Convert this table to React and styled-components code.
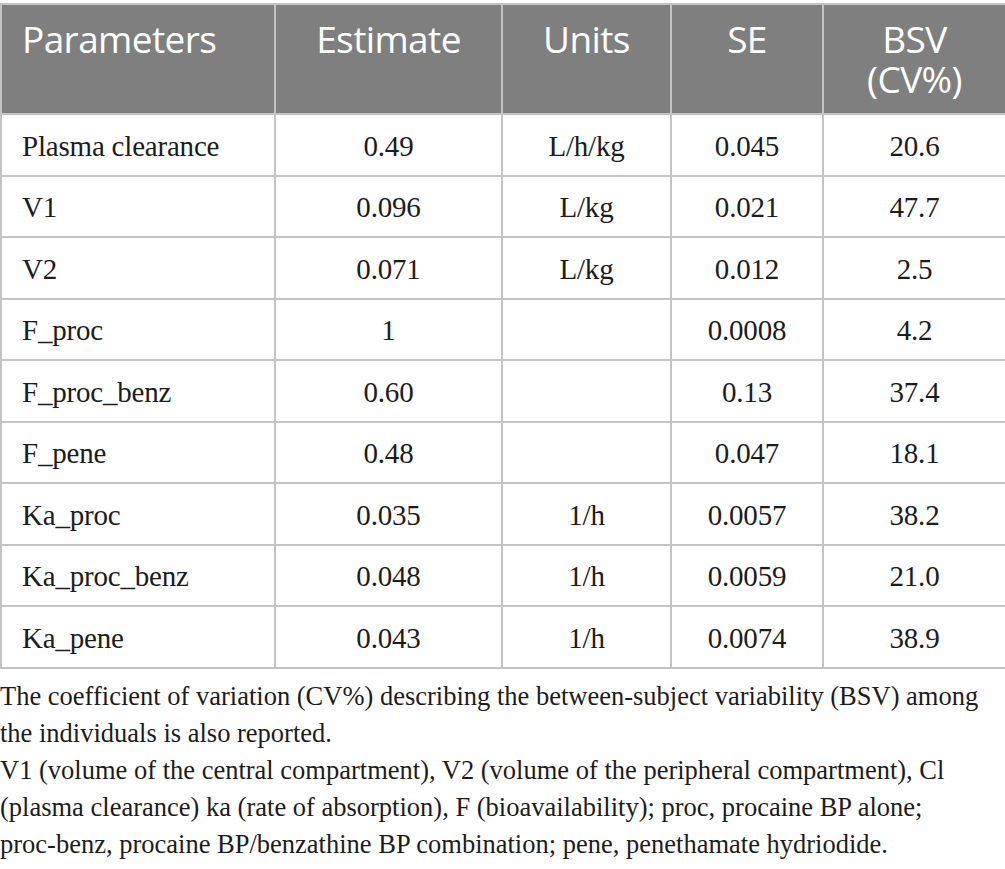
import React from 'react';
import styled, { createGlobalStyle } from 'styled-components';

const GlobalStyle = createGlobalStyle`
  body {
    margin: 0;
    background: #ffffff;
  }
`;

const Page = styled.div`
  width: 1005px;
  padding-top: 3px;
`;

const Table = styled.table`
  width: 1005px;
  border-collapse: collapse;
  table-layout: fixed;
`;

const HeadCell = styled.th`
  background-color: #7f7f7f;
  color: #ffffff;
  font-family: 'Open Sans', sans-serif;
  font-weight: 400;
  font-size: 37px;
  letter-spacing: -0.6px;
  line-height: 40px;
  height: 110px;
  box-sizing: border-box;
  padding: 14px 20px 0;
  vertical-align: top;
  text-align: ${p => (p.$left ? 'left' : 'center')};
  border: 2px solid #c4c4c4;
`;

const Cell = styled.td`
  font-family: 'Liberation Serif', 'Times New Roman', serif;
  font-size: 29px;
  letter-spacing: -0.2px;
  color: #1c1c1c;
  height: 61.5px;
  box-sizing: border-box;
  padding: 3px 20px 0;
  text-align: ${p => (p.$left ? 'left' : 'center')};
  border: 2px solid #c4c4c4;
`;

const Notes = styled.div`
  font-family: 'Liberation Serif', 'Times New Roman', serif;
  font-size: 26.5px;
  line-height: 37px;
  color: #1c1c1c;
  padding-top: 9px;
  white-space: nowrap;
`;

const columns = [
  { label: 'Parameters', width: 274, left: true },
  { label: 'Estimate', width: 227 },
  { label: 'Units', width: 169 },
  { label: 'SE', width: 152 },
  { label: ['BSV', '(CV%)'], width: 183 },
];

const rows = [
  ['Plasma clearance', '0.49', 'L/h/kg', '0.045', '20.6'],
  ['V1', '0.096', 'L/kg', '0.021', '47.7'],
  ['V2', '0.071', 'L/kg', '0.012', '2.5'],
  ['F_proc', '1', '', '0.0008', '4.2'],
  ['F_proc_benz', '0.60', '', '0.13', '37.4'],
  ['F_pene', '0.48', '', '0.047', '18.1'],
  ['Ka_proc', '0.035', '1/h', '0.0057', '38.2'],
  ['Ka_proc_benz', '0.048', '1/h', '0.0059', '21.0'],
  ['Ka_pene', '0.043', '1/h', '0.0074', '38.9'],
];

export default function App() {
  return (
    <Page>
      <GlobalStyle />
      <Table>
        <colgroup>
          {columns.map((c, i) => <col key={i} style={{ width: c.width }} />)}
        </colgroup>
        <thead>
          <tr>
            {columns.map((c, i) => (
              <HeadCell key={i} $left={c.left}>
                {Array.isArray(c.label)
                  ? c.label.map((l, j) => <div key={j}>{l}</div>)
                  : c.label}
              </HeadCell>
            ))}
          </tr>
        </thead>
        <tbody>
          {rows.map(r => (
            <tr key={r[0]}>
              {r.map((v, i) => <Cell key={i} $left={i === 0}>{v}</Cell>)}
            </tr>
          ))}
        </tbody>
      </Table>
      <Notes>
        The coefficient of variation (CV%) describing the between-subject variability (BSV) among<br />
        the individuals is also reported.<br />
        V1 (volume of the central compartment), V2 (volume of the peripheral compartment), Cl<br />
        (plasma clearance) ka (rate of absorption), F (bioavailability); proc, procaine BP alone;<br />
        proc-benz, procaine BP/benzathine BP combination; pene, penethamate hydriodide.
      </Notes>
    </Page>
  );
}
